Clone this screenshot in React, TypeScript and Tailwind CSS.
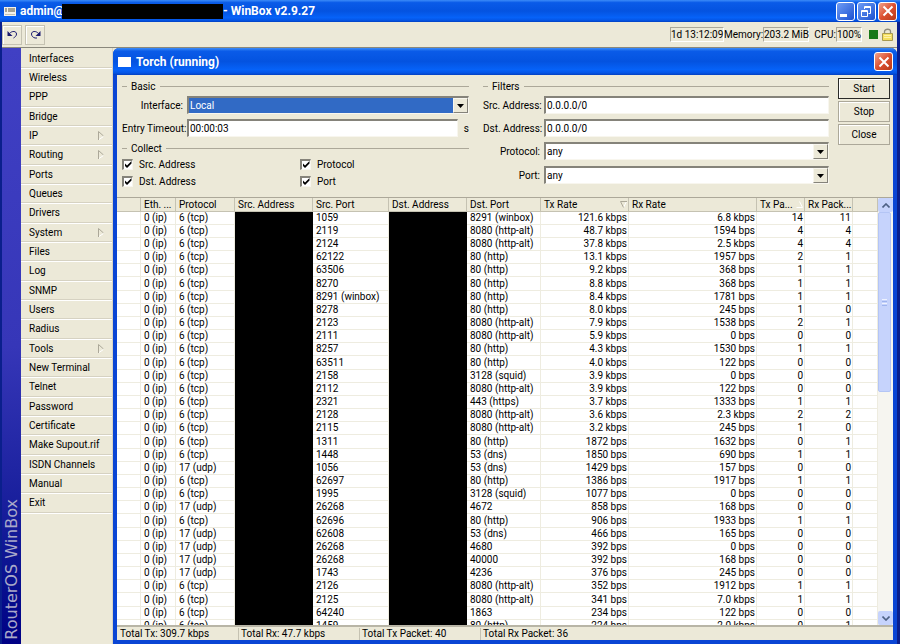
import type { ReactNode } from "react"

const menuItems = [
  { label: "Interfaces" },
  { label: "Wireless" },
  { label: "PPP" },
  { label: "Bridge" },
  { label: "IP", sub: true },
  { label: "Routing", sub: true },
  { label: "Ports" },
  { label: "Queues" },
  { label: "Drivers" },
  { label: "System", sub: true },
  { label: "Files" },
  { label: "Log" },
  { label: "SNMP" },
  { label: "Users" },
  { label: "Radius" },
  { label: "Tools", sub: true },
  { label: "New Terminal" },
  { label: "Telnet" },
  { label: "Password" },
  { label: "Certificate" },
  { label: "Make Supout.rif" },
  { label: "ISDN Channels" },
  { label: "Manual" },
  { label: "Exit" },
]

// protocol, src port, dst port, tx rate, rx rate, tx packets, rx packets
const rows = [
  ["6 (tcp)", "1059", "8291 (winbox)", "121.6 kbps", "6.8 kbps", "14", "11"],
  ["6 (tcp)", "2119", "8080 (http-alt)", "48.7 kbps", "1594 bps", "4", "4"],
  ["6 (tcp)", "2124", "8080 (http-alt)", "37.8 kbps", "2.5 kbps", "4", "4"],
  ["6 (tcp)", "62122", "80 (http)", "13.1 kbps", "1957 bps", "2", "1"],
  ["6 (tcp)", "63506", "80 (http)", "9.2 kbps", "368 bps", "1", "1"],
  ["6 (tcp)", "8270", "80 (http)", "8.8 kbps", "368 bps", "1", "1"],
  ["6 (tcp)", "8291 (winbox)", "80 (http)", "8.4 kbps", "1781 bps", "1", "1"],
  ["6 (tcp)", "8278", "80 (http)", "8.0 kbps", "245 bps", "1", "0"],
  ["6 (tcp)", "2123", "8080 (http-alt)", "7.9 kbps", "1538 bps", "2", "1"],
  ["6 (tcp)", "2111", "8080 (http-alt)", "5.9 kbps", "0 bps", "0", "0"],
  ["6 (tcp)", "8257", "80 (http)", "4.3 kbps", "1530 bps", "1", "1"],
  ["6 (tcp)", "63511", "80 (http)", "4.0 kbps", "122 bps", "0", "0"],
  ["6 (tcp)", "2158", "3128 (squid)", "3.9 kbps", "0 bps", "0", "0"],
  ["6 (tcp)", "2112", "8080 (http-alt)", "3.9 kbps", "122 bps", "0", "0"],
  ["6 (tcp)", "2321", "443 (https)", "3.7 kbps", "1333 bps", "1", "1"],
  ["6 (tcp)", "2128", "8080 (http-alt)", "3.6 kbps", "2.3 kbps", "2", "2"],
  ["6 (tcp)", "2115", "8080 (http-alt)", "3.2 kbps", "245 bps", "1", "0"],
  ["6 (tcp)", "1311", "80 (http)", "1872 bps", "1632 bps", "0", "1"],
  ["6 (tcp)", "1448", "53 (dns)", "1850 bps", "690 bps", "1", "1"],
  ["17 (udp)", "1056", "53 (dns)", "1429 bps", "157 bps", "0", "0"],
  ["6 (tcp)", "62697", "80 (http)", "1386 bps", "1917 bps", "1", "1"],
  ["6 (tcp)", "1995", "3128 (squid)", "1077 bps", "0 bps", "0", "0"],
  ["17 (udp)", "26268", "4672", "858 bps", "168 bps", "0", "0"],
  ["6 (tcp)", "62696", "80 (http)", "906 bps", "1933 bps", "1", "1"],
  ["17 (udp)", "62608", "53 (dns)", "466 bps", "165 bps", "0", "0"],
  ["17 (udp)", "26268", "4680", "392 bps", "0 bps", "0", "0"],
  ["17 (udp)", "26268", "40000", "392 bps", "168 bps", "0", "0"],
  ["17 (udp)", "1743", "4236", "376 bps", "245 bps", "0", "0"],
  ["6 (tcp)", "2126", "8080 (http-alt)", "352 bps", "1912 bps", "1", "1"],
  ["6 (tcp)", "2125", "8080 (http-alt)", "341 bps", "7.0 kbps", "1", "1"],
  ["6 (tcp)", "64240", "1863", "234 bps", "122 bps", "0", "0"],
  ["6 (tcp)", "1459", "80 (http)", "224 bps", "2.0 kbps", "0", "1"],
]

const sunken = "border-t-2 border-l-2 border-r border-b border-t-[#85837a] border-l-[#85837a] border-r-[#f8f6ee] border-b-[#f8f6ee]"
const statusBox = "h-[15px] border border-t-[#aca899] border-r-white border-b-white border-l-[#aca899] text-center"
const cell = "overflow-hidden whitespace-nowrap border-r border-b border-[#eeece0] py-0 pl-[3px] pr-px"
const hidden = "bg-black p-0"
const titleBar = "bg-[linear-gradient(180deg,#3c8cf8_0%,#0a5be8_12%,#0453e0_50%,#0662f8_80%,#0455e6_92%,#0340c0_100%)]"

function CloseButton({ label }: { label: string }) {
  return (
    <button aria-label={label} className="flex h-[19px] w-[19px] items-center justify-center rounded-[3px] border border-white bg-linear-to-br from-[#f0a08a] via-[#dc5030] to-[#b83a18]">
      <svg viewBox="0 0 12 12" className="h-3 w-3" stroke="#fff" strokeWidth="2">
        <path d="M1.5 1.5L10.5 10.5M10.5 1.5L1.5 10.5" />
      </svg>
    </button>
  )
}

function Legend({ children }: { children: ReactNode }) {
  return (
    <div className="flex h-4 items-center gap-1">
      <span className="h-px w-[5px] bg-[#aca899]" />
      <span>{children}</span>
      <span className="h-px flex-1 bg-[#aca899]" />
    </div>
  )
}

function Select({ id, value, active }: { id: string; value: string; active?: boolean }) {
  return (
    <div className={`relative h-[18px] min-w-0 flex-1 bg-white ${sunken}`}>
      <select
        id={id}
        defaultValue={value}
        className={`block h-full w-full appearance-none pl-px outline-none ${active ? "bg-[#316ac5] text-white" : "bg-white"}`}
      >
        <option>{value}</option>
      </select>
      <span className="pointer-events-none absolute inset-y-0 right-0 flex w-[15px] items-center justify-center border border-t-[#f8f6ee] border-r-[#85837a] border-b-[#85837a] border-l-[#f8f6ee] bg-[#ece9d8]">
        <svg viewBox="0 0 7 4" className="h-1 w-[7px]">
          <path d="M0 0h7L3.5 4z" fill="#000" />
        </svg>
      </span>
    </div>
  )
}

function TextBox({ id, value }: { id: string; value: string }) {
  return <input id={id} type="text" defaultValue={value} className={`h-[18px] min-w-0 flex-1 bg-white pl-px outline-none ${sunken}`} />
}

function Check({ label }: { label: string }) {
  return (
    <label className="flex h-[17px] items-center gap-[6px]">
      <span className="relative flex">
        <input type="checkbox" defaultChecked className={`h-[11px] w-[11px] appearance-none bg-white ${sunken}`} />
        <svg viewBox="0 0 11 11" className="pointer-events-none absolute inset-0 h-[11px] w-[11px]">
          <path d="M3 4.5V7L5 9L9.5 4.5V2L5 6.5Z" fill="#000" />
        </svg>
      </span>
      {label}
    </label>
  )
}

function Th({ children, mark }: { children?: ReactNode; mark?: "up" | "down" }) {
  return (
    <th className="overflow-hidden whitespace-nowrap border-r border-b border-[#c5c2b2] bg-[#ece9d8] p-0 pl-[3px] text-left font-normal">
      <span className="flex items-center justify-between">
        {children}
        {mark && (
          <svg viewBox="0 0 7 7" className="mr-px h-[7px] w-[7px]" fill="none">
            {mark === "down" ? (
              <>
                <path d="M6.5 .5L3.5 6.5" stroke="#fff" />
                <path d="M7 .5H.5L3.5 6.5" stroke="#aca899" />
              </>
            ) : (
              <path d="M.5 6.5H6.5L3.5 .5" stroke="#fff" />
            )}
          </svg>
        )}
      </span>
    </th>
  )
}

function Sidebar() {
  return (
    <>
      <div className="flex w-[19px] items-end justify-center bg-linear-to-b from-[#4040c4] via-[#3636b8] via-50% to-[#000084] pb-1">
        <span className="rotate-180 whitespace-nowrap font-['DejaVu_Sans'] text-base leading-[19px] text-[#a9a9c9] [writing-mode:vertical-rl]">
          RouterOS WinBox
        </span>
      </div>
      <nav className="w-[92px] border-r border-[#d8d4c4] pt-px">
        {menuItems.map((item) => (
          <button
            key={item.label}
            className="flex h-[19px] w-full items-center justify-between whitespace-nowrap border-b border-[#d6d2c2] pr-2 pl-2 text-left shadow-[0_1px_0_#fff] nth-[3n]:h-5"
          >
            {item.label}
            {item.sub && (
              <svg viewBox="0 0 6 9" className="h-[9px] w-[6px]" fill="none">
                <path d="M.5 9V.5L5.5 5" stroke="#aca899" />
                <path d="M5.5 5.5L1 8.5" stroke="#fff" />
              </svg>
            )}
          </button>
        ))}
      </nav>
    </>
  )
}

function TorchForm() {
  return (
    <div className="flex h-[122px] shrink-0 pr-[3px] pl-[5px]">
      <div className="w-[347px] pt-[3px]">
        <Legend>Basic</Legend>
        <div className="mt-[2px] flex items-center gap-1">
          <label htmlFor="iface" className="w-[61px] text-right">Interface:</label>
          <Select id="iface" value="Local" active />
        </div>
        <div className="mt-[5px] flex items-center gap-1">
          <label htmlFor="timeout" className="w-[61px] text-right whitespace-nowrap">Entry Timeout:</label>
          <TextBox id="timeout" value="00:00:03" />
          <span className="w-[7px] text-right">s</span>
        </div>
        <div className="mt-[3px]">
          <Legend>Collect</Legend>
        </div>
        <div className="grid grid-cols-[178px_1fr]">
          <Check label="Src. Address" />
          <Check label="Protocol" />
          <Check label="Dst. Address" />
          <Check label="Port" />
        </div>
      </div>
      <div className="ml-[14px] flex-1 pt-[3px]">
        <Legend>Filters</Legend>
        <div className="mt-[2px] flex items-center gap-1">
          <label htmlFor="src" className="w-[57px] text-right whitespace-nowrap">Src. Address:</label>
          <TextBox id="src" value="0.0.0.0/0" />
        </div>
        <div className="mt-[5px] flex items-center gap-1">
          <label htmlFor="dst" className="w-[57px] text-right whitespace-nowrap">Dst. Address:</label>
          <TextBox id="dst" value="0.0.0.0/0" />
        </div>
        <div className="mt-[5px] flex items-center gap-1">
          <label htmlFor="proto" className="w-[57px] text-right">Protocol:</label>
          <Select id="proto" value="any" />
        </div>
        <div className="mt-[6px] flex items-center gap-1">
          <label htmlFor="port" className="w-[57px] text-right">Port:</label>
          <Select id="port" value="any" />
        </div>
      </div>
      <div className="ml-[9px] flex w-[52px] flex-col gap-[2px] pt-[3px]">
        <button className="h-[21px] border border-[#2a2a28] shadow-[inset_1px_1px_0_#fff]">Start</button>
        <button className="h-[21px] border border-[#aca899] shadow-[inset_1px_1px_0_#fff]">Stop</button>
        <button className="h-[21px] border border-[#aca899] shadow-[inset_1px_1px_0_#fff]">Close</button>
      </div>
    </div>
  )
}

function TorchTable() {
  return (
    <div className="flex min-h-0 flex-1 border-t border-[#aca899] bg-white">
      <div className="min-w-0 flex-1 overflow-hidden">
        <table className="w-full table-fixed border-separate border-spacing-0">
          <colgroup>
            <col className="w-[24px]" />
            <col className="w-[35px]" />
            <col className="w-[59px]" />
            <col className="w-[78px]" />
            <col className="w-[76px]" />
            <col className="w-[78px]" />
            <col className="w-[74px]" />
            <col className="w-[88px]" />
            <col className="w-[128px]" />
            <col className="w-[48px]" />
            <col className="w-[48px]" />
            <col />
          </colgroup>
          <thead>
            <tr className="h-[14px]">
              <Th />
              <Th>Eth. ...</Th>
              <Th>Protocol</Th>
              <Th>Src. Address</Th>
              <Th>Src. Port</Th>
              <Th>Dst. Address</Th>
              <Th>Dst. Port</Th>
              <Th mark="down">Tx Rate</Th>
              <Th>Rx Rate</Th>
              <Th mark="up">Tx Pa...</Th>
              <Th>Rx Pack...</Th>
              <Th />
            </tr>
          </thead>
          <tbody>
            {rows.map(([proto, srcPort, dstPort, txRate, rxRate, txPackets, rxPackets], i) => (
              <tr key={i} className="h-[13px] leading-3 nth-[6n]:h-[14px]">
                <td className={cell} />
                <td className={cell}>0 (ip)</td>
                <td className={cell}>{proto}</td>
                <td className={hidden} />
                <td className={cell}>{srcPort}</td>
                <td className={hidden} />
                <td className={cell}>{dstPort}</td>
                <td className={`${cell} text-right`}>{txRate}</td>
                <td className={`${cell} text-right`}>{rxRate}</td>
                <td className={`${cell} text-right`}>{txPackets}</td>
                <td className={`${cell} text-right`}>{rxPackets}</td>
                <td className={cell} />
              </tr>
            ))}
          </tbody>
        </table>
      </div>
      <div className="flex w-[15px] flex-col bg-[#f6f5f0]">
        <button aria-label="Scroll up" className="flex h-[14px] shrink-0 items-center justify-center rounded-xs bg-[#c6d3fc]">
          <svg viewBox="0 0 8 5" className="h-[5px] w-2" fill="none">
            <path d="M.5 4.5L4 1L7.5 4.5" stroke="#4d6185" strokeWidth="1.6" />
          </svg>
        </button>
        <div className="mr-[2px] flex h-[180px] flex-col items-center justify-center gap-px rounded-xs border border-[#b4c5f5] bg-[#c6d3fc]">
          <span className="h-px w-[5px] bg-[#eef2ff]" />
          <span className="h-px w-[5px] bg-[#9fb4ee]" />
          <span className="h-px w-[5px] bg-[#eef2ff]" />
          <span className="h-px w-[5px] bg-[#9fb4ee]" />
        </div>
        <button aria-label="Scroll down" className="mt-auto flex h-[14px] shrink-0 items-center justify-center rounded-xs bg-[#c6d3fc]">
          <svg viewBox="0 0 8 5" className="h-[5px] w-2" fill="none">
            <path d="M.5 .5L4 4L7.5 .5" stroke="#4d6185" strokeWidth="1.6" />
          </svg>
        </button>
      </div>
    </div>
  )
}

function StatusBar() {
  return (
    <div className="flex h-[15px] shrink-0 items-center border-t-2 border-[#b8b5a6] leading-3">
      <span className="w-[122px] border-r border-[#c5c2b2] pl-[3px]">Total Tx: 309.7 kbps</span>
      <span className="w-[121px] border-r border-[#c5c2b2] pl-[2px]">Total Rx: 47.7 kbps</span>
      <span className="w-[121px] border-r border-[#c5c2b2] pl-[2px]">Total Tx Packet: 40</span>
      <span className="pl-[2px]">Total Rx Packet: 36</span>
    </div>
  )
}

export default function App() {
  return (
    <div className="flex h-screen flex-col overflow-hidden bg-[#ece9d8] font-[Roboto,'Liberation_Sans',sans-serif] text-[10px] leading-[13px] text-black">
      <header className={`flex h-[22px] shrink-0 items-center pr-[3px] pl-1 text-xs font-bold text-white ${titleBar}`}>
        <svg viewBox="0 0 12 9" className="h-[9px] w-3">
          <path d="M0 0h12v9H0z" fill="#f4f2ea" />
          <path d="M1 1h2v4H1zM4 1h7v4H4z" fill="#a5a294" />
          <path d="M1 7h10v1H1z" fill="#c5c2b2" />
        </svg>
        <span className="ml-1 w-[42px]">admin@</span>
        <span className="h-[15px] w-[161px] bg-black" />
        <h1>- WinBox v2.9.27</h1>
        <div className="ml-auto flex gap-[2px]">
          <button aria-label="Minimize" className="flex h-[19px] w-[19px] items-end rounded-[3px] border border-white bg-linear-to-br from-[#6f9cf5] to-[#1c4fd0] pb-[3px] pl-[3px]">
            <span className="h-[3px] w-[7px] bg-white" />
          </button>
          <button aria-label="Restore" className="flex h-[19px] w-[19px] items-center justify-center rounded-[3px] border border-white bg-linear-to-br from-[#6f9cf5] to-[#1c4fd0]">
            <svg viewBox="0 0 11 11" className="h-[11px] w-[11px]" fill="none" stroke="#fff">
              <path d="M3.5 3V.5H9.5V7.5H7.5M3 1.5H10M.5 4.5H6.5V10.5H.5ZM0 5.5H7" />
            </svg>
          </button>
          <CloseButton label="Close WinBox" />
        </div>
      </header>

      <div className="flex min-h-0 flex-1 flex-col border-r-3 border-l-2 border-r-[#0a1f8c] border-l-[#0a1f8c]">
        <div className="flex h-[26px] shrink-0 items-center border-b border-[#8a887c] pr-1">
          <button aria-label="Undo" className="flex h-5 w-5 items-center justify-center border border-[#c5c2b2] shadow-[inset_1px_1px_0_#fff]">
            <svg viewBox="0 0 11 9" className="h-[9px] w-[11px]" fill="none">
              <path d="M2.5 3.5C5 .5 9.5 1 9.5 4C9.5 6 8 7 6.5 8" stroke="#1c1c70" />
              <path d="M.5 1V6H5.5Z" fill="#1c1c70" />
            </svg>
          </button>
          <button aria-label="Redo" className="ml-[3px] flex h-5 w-5 items-center justify-center border border-[#c5c2b2] shadow-[inset_1px_1px_0_#fff]">
            <svg viewBox="0 0 11 9" className="h-[9px] w-[11px]" fill="none">
              <path d="M8.5 3.5C6 .5 1.5 1 1.5 4C1.5 6 3 7.5 5 8H7" stroke="#1c1c70" />
              <path d="M10.5 1V6H5.5Z" fill="#1c1c70" />
            </svg>
          </button>
          <div className="ml-auto flex items-center whitespace-nowrap">
            <span className={`w-[54px] ${statusBox}`}>1d 13:12:09</span>
            <span className="w-[39px] text-right">Memory:</span>
            <span className={`w-[46px] ${statusBox}`}>203.2 MiB</span>
            <span className="w-[27px] text-right">CPU:</span>
            <span className={`w-[26px] ${statusBox}`}>100%</span>
            <span className="ml-[7px] h-[9px] w-[9px] bg-[#187818]" />
            <svg viewBox="0 0 11 13" className="ml-1 h-[13px] w-[11px]">
              <path d="M2.5 6V3.5C2.5 .5 8.5 .5 8.5 3.5V6" fill="none" stroke="#8f8c7c" strokeWidth="1.3" />
              <path d="M.5 5.5H10.5V12.5H.5Z" fill="#f5df60" stroke="#a89a50" />
              <path d="M2 7.5H9M2 9.5H9" stroke="#fff3a8" />
            </svg>
          </div>
        </div>

        <main className="flex min-h-0 flex-1">
          <Sidebar />
          <section className="flex min-w-0 flex-1 flex-col rounded-t-md border-r-4 border-b-4 border-l-4 border-[#0a45d4]">
            <div className={`-mx-1 flex h-[27px] shrink-0 items-center rounded-t-md pr-1 pl-[5px] text-xs font-bold text-white ${titleBar}`}>
              <span className="h-[10px] w-[13px] bg-white" />
              <h2 className="ml-[5px] flex-1">Torch (running)</h2>
              <CloseButton label="Close Torch" />
            </div>
            <TorchForm />
            <TorchTable />
            <StatusBar />
          </section>
        </main>
      </div>
    </div>
  )
}
